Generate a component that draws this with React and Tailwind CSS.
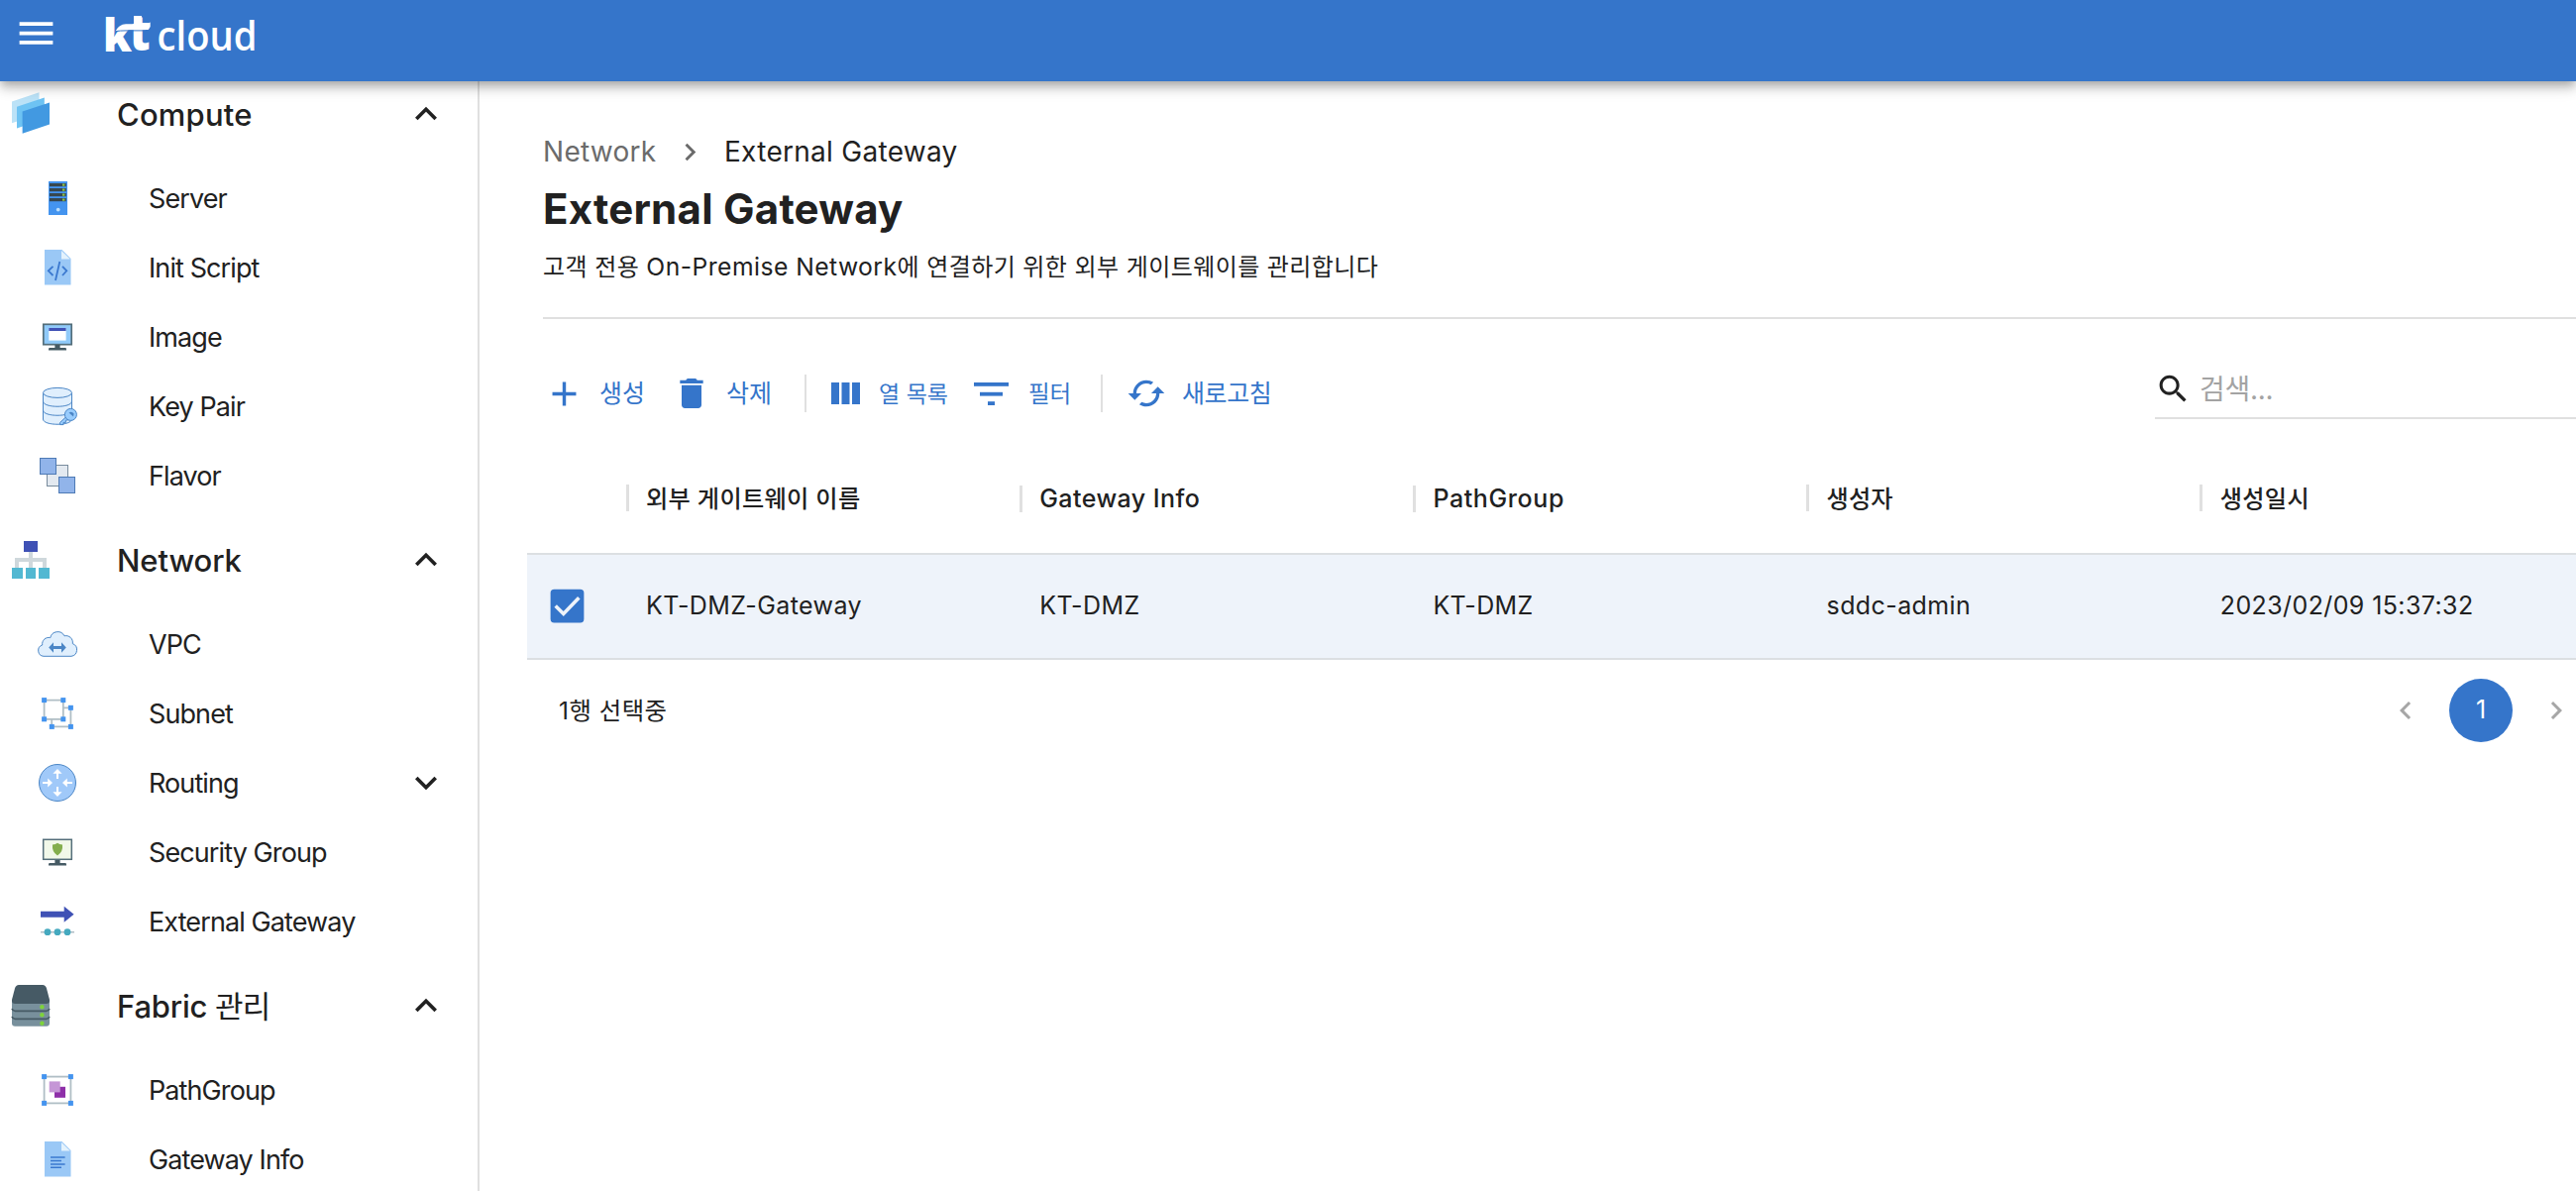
import React from "react";

/* ---------- shared icon helpers ---------- */
function Mui({ d, className }) {
  return (
    <svg viewBox="0 0 24 24" fill="currentColor" className={className}>
      <path d={d} />
    </svg>
  );
}

const PATHS = {
  menu: "M3 18h18v-2H3v2zm0-5h18v-2H3v2zm0-7v2h18V6H3z",
  less: "M12 8l-6 6 1.41 1.41L12 10.83l4.59 4.58L18 14z",
  more: "M16.59 8.59L12 13.17 7.41 8.59 6 10l6 6 6-6z",
  before: "M15.41 7.41L14 6l-6 6 6 6 1.41-1.41L10.83 12z",
  next: "M10 6L8.59 7.41 13.17 12l-4.58 4.59L10 18l6-6z",
  add: "M19 13h-6v6h-2v-6H5v-2h6V5h2v6h6v2z",
  trash: "M6 19c0 1.1.9 2 2 2h8c1.1 0 2-.9 2-2V7H6v12zM19 4h-3.5l-1-1h-5l-1 1H5v2h14V4z",
  cached:
    "M19 8l-4 4h3c0 3.31-2.69 6-6 6-1.01 0-1.97-.25-2.8-.7l-1.46 1.46C8.97 19.54 10.43 20 12 20c4.42 0 8-3.58 8-8h3l-4-4zM6 12c0-3.31 2.69-6 6-6 1.01 0 1.97.25 2.8.7l1.46-1.46C15.03 4.46 13.57 4 12 4c-4.42 0-8 3.58-8 8H1l4 4 4-4H6z",
  search:
    "M15.5 14h-.79l-.28-.27C15.41 12.59 16 11.11 16 9.5 16 5.91 13.09 3 9.5 3S3 5.91 3 9.5 5.91 16 9.5 16c1.61 0 3.09-.59 4.23-1.57l.27.28v.79l5 4.99L20.49 19l-4.99-5zm-6 0C7.01 14 5 11.99 5 9.5S7.01 5 9.5 5 14 7.01 14 9.5 11.99 14 9.5 14z",
};

/* Icons are drawn around a (0,0) centre in a 48px box. */
function Icon({ children }) {
  return (
    <svg viewBox="-24 -24 48 48" className="h-12 w-12 shrink-0">
      {children}
    </svg>
  );
}

const Stand = () => (
  <>
    <rect x="-2.6" y="8" width="5.2" height="4" fill="#455a64" />
    <path d="M-9 13.5v-1.2q0-1.3 1.3-1.3h15.4q1.3 0 1.3 1.3v1.2z" fill="#455a64" />
  </>
);

const Page = ({ children }) => (
  <>
    <path d="M-13 -18H4.5L13.5 -9V17.5H-13z" fill="#9ac8f6" />
    <path d="M4 -17V-8.5H12.8z" fill="#e3f2fd" />
    {children}
  </>
);

const Handle = ({ x, y }) => <rect x={x - 2.5} y={y - 2.5} width="5" height="5" fill="#4494ef" />;

const ICONS = {
  compute: (
    <Icon>
      <polygon points="-19,-12.5 8.5,-21.7 8.5,0 -19,9.2" fill="#bbe2f7" />
      <polygon points="-14,-7.2 13.8,-16.6 13.8,5 -14,14.6" fill="#6ec3f3" />
      <polygon points="-8.4,-2.5 19,-11.6 19,10.4 -8.4,19.8" fill="#4299e1" />
    </Icon>
  ),
  network: (
    <Icon>
      <path d="M0 -10V9M-14 9V0H14V9" fill="none" stroke="#cfd8dc" strokeWidth="4" />
      <rect x="-7" y="-19" width="14" height="11" fill="#3f51b5" />
      <rect x="-19" y="8" width="11" height="11" fill="#52b8d2" />
      <rect x="-5" y="8" width="10" height="11" fill="#52b8d2" />
      <rect x="8" y="8" width="11" height="11" fill="#52b8d2" />
    </Icon>
  ),
  fabric: (
    <Icon>
      <path d="M-19 -6H19V17.5Q19 20.7 15.8 20.7H-15.8Q-19 20.7 -19 17.5z" fill="#78909c" />
      <path d="M-12 -21H12Q15 -21 16 -17.5L19 -6V-5Q19 -2 15.8 -2H-15.8Q-19 -2 -19 -5V-6L-16 -17.5Q-15 -21 -12 -21z" fill="#465a65" />
      <path d="M-19 3Q-18 5.3 -15.8 5.3H15.8Q18 5.3 19 3M-19 11Q-18 13.3 -15.8 13.3H15.8Q18 13.3 19 11" fill="none" stroke="#465a65" strokeWidth="1.8" />
      <circle cx="11.4" cy="1.2" r="2.2" fill="#7ed33b" />
      <circle cx="11.4" cy="9.3" r="2.2" fill="#7ed33b" />
      <circle cx="11.4" cy="17.8" r="2.2" fill="#7ed33b" />
    </Icon>
  ),
  server: (
    <Icon>
      <rect x="-9" y="-17" width="19" height="34" fill="#4494ef" />
      {[-15, -10, -5, 0].map((y) => (
        <g key={y}>
          <rect x="-8" y={y} width="16.8" height="3.2" fill="#37474f" />
          <rect x="5" y={y + 0.5} width="2.4" height="2.2" fill="#8bc34a" />
        </g>
      ))}
      <circle cx=".7" cy="11.6" r="1.9" fill="#bbdefb" />
    </Icon>
  ),
  script: (
    <Icon>
      <Page>
        <path d="M-4.5 -1.2L-9.2 3.3L-4.5 8M5 -1.2L9.3 3.3L5 8M2.3 -6L-2 13" fill="none" stroke="#3a78cf" strokeWidth="1.8" />
      </Page>
    </Icon>
  ),
  image: (
    <Icon>
      <rect x="-14.2" y="-12.7" width="28.4" height="20.4" fill="#90caf9" stroke="#546e7a" strokeWidth="1.7" />
      <rect x="-8.7" y="-9" width="17.3" height="12.6" fill="#fff" />
      <rect x="-8.7" y="-9" width="17.3" height="3" fill="#3f51b5" />
      <Stand />
    </Icon>
  ),
  keypair: (
    <Icon>
      <g fill="#e0effd" stroke="#4b86c6" strokeWidth="1">
        <path d="M-14.5 -13.5V13C-14.5 20 14.5 20 14.5 13V-13.5" />
        <ellipse cx="0" cy="-13.6" rx="14.5" ry="5" />
        <path d="M-14.5 -5C-14.5 2 14.5 2 14.5 -5M-14.5 4C-14.5 11 14.5 11 14.5 4" fill="none" />
      </g>
      <path d="M9.5 10L2.6 16.4V18.6H6V16.4H8.4V14.2L12 13.6" fill="#98ccfd" stroke="#4b86c6" strokeWidth="1" />
      <circle cx="13.4" cy="8.4" r="6" fill="#98ccfd" stroke="#4b86c6" strokeWidth="1" />
      <path d="M11.5 6.4Q14.5 4.5 16.6 7.6L16 10.4z" fill="#4b86c6" />
    </Icon>
  ),
  flavor: (
    <Icon>
      <rect x="-10.5" y="-10.5" width="21" height="21" fill="#e3e9f0" stroke="#788b9c" />
      <rect x="-17.5" y="-17.5" width="16" height="16" fill="#91b4ea" stroke="#4e7ab5" />
      <rect x="1.5" y="1.5" width="16" height="16" fill="#91b4ea" stroke="#4e7ab5" />
    </Icon>
  ),
  vpc: (
    <Icon>
      <path d="M-14 12.3A5.8 5.8 0 0 1 -15.3 1A6.6 6.6 0 0 1 -7.2 -6.4A7.6 7.6 0 0 1 7 -8.2A6.8 6.8 0 0 1 15.3 -.4A6.6 6.6 0 0 1 14 12.3z" fill="#e0effd" stroke="#4b86c6" strokeWidth="1" />
      <path d="M-8.8 3.5L-4 -1.8V1.9H4V-1.8L8.8 3.5L4 8.8V5.1H-4V8.8z" fill="#4b86c6" />
    </Icon>
  ),
  subnet: (
    <Icon>
      <path d="M-13.4 -13.4H5.8V5.8H-13.4zM5.8 -5.6H13.4V13.4H-5.8V5.8" fill="none" stroke="#b0bec5" strokeWidth="1.8" />
      <Handle x={-13.4} y={-13.4} />
      <Handle x={5.8} y={-13.4} />
      <Handle x={-13.4} y={5.8} />
      <Handle x={5.8} y={5.8} />
      <Handle x={13.4} y={-5.7} />
      <Handle x={-5.7} y={13.4} />
      <Handle x={13.4} y={13.4} />
    </Icon>
  ),
  routing: (
    <Icon>
      <circle r="18.5" fill="#a0c9f9" stroke="#4b86c6" strokeWidth="1" />
      <g fill="#fff">
        <path d="M0 -14L4.6 -9.2H1V-4H-1V-9.2H-4.6z" />
        <path d="M0 14L4.6 9.2H1V4H-1V9.2H-4.6z" />
        <path d="M-5 0L-9.8 -4.6V-1H-15V1H-9.8V4.6z" />
        <path d="M5 0L9.8 -4.6V-1H15V1H9.8V4.6z" />
      </g>
    </Icon>
  ),
  security: (
    <Icon>
      <rect x="-14.3" y="-12.7" width="28.6" height="20" fill="#f1f8e9" stroke="#546e7a" strokeWidth="1.5" />
      <path d="M0 -9.2Q2 -7.6 5 -7.4Q5.8 0 0 3.4Q-5.8 0 -5 -7.4Q-2 -7.6 0 -9.2z" fill="#83ae4d" />
      <Stand />
    </Icon>
  ),
  external: (
    <Icon>
      <path d="M-17 -10.2H6.7V-15.2L16.6 -7.2L6.7 .8V-4.2H-17z" fill="#3f51b5" />
      <path d="M-17 10.7H17" stroke="#b0bec5" strokeWidth="1.6" />
      <circle cx="-10" cy="10.7" r="3.4" fill="#45a9bf" />
      <circle cx="0" cy="10.7" r="3.4" fill="#45a9bf" />
      <circle cx="10" cy="10.7" r="3.4" fill="#45a9bf" />
    </Icon>
  ),
  pathgroup: (
    <Icon>
      <rect x="-13.4" y="-13.4" width="26.8" height="26.8" fill="none" stroke="#b0bec5" strokeWidth="1.8" />
      <rect x="-3" y="-3.2" width="11" height="11" fill="#8e2fa8" />
      <rect x="-8.3" y="-8.6" width="11" height="11" fill="#c596d6" />
      <Handle x={-13.4} y={-13.4} />
      <Handle x={13.4} y={-13.4} />
      <Handle x={-13.4} y={13.4} />
      <Handle x={13.4} y={13.4} />
    </Icon>
  ),
  info: (
    <Icon>
      <Page>
        <path d="M-7 -2H7.6M-7 1.4H4M-7 4.9H7.6M-7 8.2H4" stroke="#3a78cf" strokeWidth="1.5" />
      </Page>
    </Icon>
  ),
};

/* ---------- header ---------- */
function Logo() {
  return (
    <svg viewBox="95 0 180 82" className="ml-9 h-[82px] w-[180px]" fill="#fff">
      <text x="103.9" y="51.5" fontSize="46.5" fontWeight="800" fontFamily="'Open Sans', sans-serif" textLength="29" lengthAdjust="spacingAndGlyphs">
        k
      </text>
      <text x="130.5" y="51.2" fontSize="50" fontWeight="800" fontFamily="'Open Sans', sans-serif" textLength="21" lengthAdjust="spacingAndGlyphs">
        t
      </text>
      <rect x="135" y="16" width="8" height="16" />
      <path d="M116.5 31.5Q120 24.5 127 24.3H144Q149 24.3 151.7 22.6V26.8Q151 29.8 146.5 30.3H127Q121 30.3 116.5 31.5z" />
      <path d="M116.5 31.6Q121 30.9 127 30.9H148" fill="none" stroke="#3575ca" strokeWidth="1" />
      <text x="158.6" y="51.3" fontSize="41" fontWeight="600" fontFamily="'Open Sans', sans-serif" textLength="101" lengthAdjust="spacingAndGlyphs">
        cloud
      </text>
    </svg>
  );
}

function Header() {
  return (
    <header className="relative z-10 flex h-[82px] shrink-0 bg-[#3575ca] pl-[14px] text-white shadow-[0_4px_8px_-2px_rgba(0,0,0,0.2),0_8px_10px_rgba(0,0,0,0.14),0_2px_20px_rgba(0,0,0,0.12)]">
      <Mui d={PATHS.menu} className="mt-[11px] h-[45px] w-[45px]" />
      <Logo />
    </header>
  );
}

/* ---------- sidebar ---------- */
const MENU = [
  {
    icon: "compute",
    label: "Compute",
    track: "tracking-[0.2px]",
    items: [
      { icon: "server", label: "Server" },
      { icon: "script", label: "Init Script" },
      { icon: "image", label: "Image" },
      { icon: "keypair", label: "Key Pair" },
      { icon: "flavor", label: "Flavor" },
    ],
  },
  {
    icon: "network",
    label: "Network",
    track: "tracking-[-0.1px]",
    items: [
      { icon: "vpc", label: "VPC" },
      { icon: "subnet", label: "Subnet" },
      { icon: "routing", label: "Routing", expandable: true },
      { icon: "security", label: "Security Group" },
      { icon: "external", label: "External Gateway" },
    ],
  },
  {
    icon: "fabric",
    label: "Fabric",
    labelKo: "관리",
    track: "tracking-[-0.2px]",
    items: [
      { icon: "pathgroup", label: "PathGroup" },
      { icon: "info", label: "Gateway Info" },
    ],
  },
];

function Sidebar() {
  return (
    <nav className="-mt-[17px] w-[484px] shrink-0 border-r-2 border-[#e0e0e0]">
      {MENU.map((group) => (
        <section key={group.label}>
          <div className="flex h-[100px] items-center pl-[7px] pr-[30px]">
            {ICONS[group.icon]}
            <span className={"ml-[63px] flex-1 pt-0.5 text-[31px] font-medium " + group.track}>
              {group.label}
              {group.labelKo && <span className="font-normal tracking-[-0.9px]"> {group.labelKo}</span>}
            </span>
            <Mui d={PATHS.less} className="h-11 w-11" />
          </div>
          {group.items.map((item) => (
            <div key={item.label} className="flex h-[70px] items-center pl-[34px] pr-[30px]">
              {ICONS[item.icon]}
              <span className="ml-[68px] flex-1 pt-0.5 text-[27px] tracking-[-0.9px]">{item.label}</span>
              {item.expandable && <Mui d={PATHS.more} className="h-11 w-11" />}
            </div>
          ))}
        </section>
      ))}
    </nav>
  );
}

/* ---------- main ---------- */
function PageTitle() {
  return (
    <div className="border-b-2 border-[#e0e0e0] pb-[33px] pt-[53px]">
      <div className="flex h-9 items-center text-[28px] tracking-[0.28px]">
        <span className="w-[131px] text-[#6b6b6b]">Network</span>
        <Mui d={PATHS.next} className="h-[35px] w-[35px] text-[#6b6b6b]" />
        <span className="ml-[17px]">External Gateway</span>
      </div>
      <h1 className="mt-[10px] text-[42px] font-bold leading-[60px] tracking-[0.25px]">External Gateway</h1>
      <p className="mt-[10px] h-9 text-[24px] leading-9 tracking-[0.42px]">
        고객 전용 <span className="text-[24.7px] tracking-[0.45px]">On-Premise Network</span>에 연결하기 위한 외부 게이트웨이를 관리합니다
      </p>
    </div>
  );
}

function Toolbar() {
  return (
    <div className="mt-[37px] flex h-[76px] items-center text-[25px] text-[#3575ca]">
      <div className="flex w-[129px] items-center">
        <Mui d={PATHS.add} className="ml-[1px] h-[41px] w-[41px]" />
        <span className="ml-[15px] pt-0.5">생성</span>
      </div>
      <div className="flex w-[135px] items-center">
        <Mui d={PATHS.trash} className="ml-[1px] h-10 w-10" />
        <span className="ml-[15px] pt-0.5">삭제</span>
      </div>
      <div className="h-[38px] w-0.5 bg-[#e0e0e0]" />
      <div className="flex w-[169px] items-center pl-[25px]">
        <svg viewBox="0 0 29 22" className="h-[22px] w-[29px]" fill="currentColor">
          <rect x="0" width="8" height="22" />
          <rect x="10.5" width="8" height="22" />
          <rect x="21" width="8" height="22" />
        </svg>
        <span className="ml-[19px] pt-0.5 text-[23px]">열 목록</span>
      </div>
      <div className="flex w-[128px] items-center">
        <svg viewBox="0 0 35 23" className="h-[23px] w-[35px]" fill="currentColor">
          <rect x="0" width="35" height="3.8" />
          <rect x="6" y="9.8" width="23" height="3.8" />
          <rect x="14" y="19.2" width="7" height="3.8" />
        </svg>
        <span className="ml-[20px] pt-0.5 text-[23.5px]">필터</span>
      </div>
      <div className="h-[38px] w-0.5 bg-[#e0e0e0]" />
      <div className="flex items-center pl-[24px]">
        <Mui d={PATHS.cached} className="h-[40px] w-[40px]" />
        <span className="ml-[16px] pt-0.5 tracking-[-0.4px]">새로고침</span>
      </div>
      <div className="mb-3 ml-auto flex h-[60px] w-[425px] items-center self-end border-b-2 border-[#e0e0e0] text-[28px] tracking-[-0.3px] text-[#a3a3a3]">
        <Mui d={PATHS.search} className="h-[37px] w-[37px] text-[#212121]" />
        <span className="ml-2 pt-px">검색...</span>
      </div>
    </div>
  );
}

const COLUMNS = [
  { head: "외부 게이트웨이 이름", headStyle: "text-[24.2px] tracking-[0.3px]", value: "KT-DMZ-Gateway" },
  { head: "Gateway Info", headStyle: "text-[25px] tracking-[0.45px]", value: "KT-DMZ" },
  { head: "PathGroup", headStyle: "text-[25px] tracking-[0.6px]", value: "KT-DMZ" },
  { head: "생성자", headStyle: "text-[24.2px] tracking-[0.1px]", value: "sddc-admin" },
  { head: "생성일시", headStyle: "text-[24.2px] tracking-[0.3px]", value: "2023/02/09 15:37:32" },
];

function Table() {
  return (
    <div className="-ml-4 text-[25px]">
      <div className="flex h-[123px] items-center pt-[13px] font-medium">
        <div className="w-[99.5px] shrink-0" />
        {COLUMNS.map((c) => (
          <div key={c.head} className="flex w-[397.2px] shrink-0 items-center">
            <div className="h-[27px] w-[3px] bg-[#e0e0e0]" />
            <span className={"ml-[17.5px] pt-0.5 " + c.headStyle}>{c.head}</span>
          </div>
        ))}
      </div>
      <div className="flex h-[108px] items-center border-y-2 border-[#dcdfe2] bg-[#eef3fa] pb-0.5">
        <div className="w-[99.5px] shrink-0 pl-[18px]">
          <svg viewBox="0 0 24 24" className="h-[45px] w-[45px]">
            <rect x="3" y="3" width="18" height="18" rx="2" fill="#3575ca" />
            <path d="M5.7 12L10 16.3L18.3 7.6" fill="none" stroke="#eef3fa" strokeWidth="1.9" />
          </svg>
        </div>
        {COLUMNS.map((c) => (
          <div key={c.head} className="w-[397.2px] shrink-0 pl-[20.5px] pt-px tracking-[0.4px]">
            {c.value}
          </div>
        ))}
      </div>
      <div className="flex h-[102px] items-center justify-between">
        <span className="ml-8 text-[24.4px] tracking-[0.5px]">1행 선택중</span>
        <div className="-mr-3 flex items-center gap-3">
          <div className="grid h-16 w-16 place-items-center text-[#a6a6a6]">
            <Mui d={PATHS.before} className="h-9 w-9" />
          </div>
          <div className="grid h-16 w-16 place-items-center rounded-full bg-[#3575ca] text-white">1</div>
          <div className="grid h-16 w-16 place-items-center text-[#a6a6a6]">
            <Mui d={PATHS.next} className="h-9 w-9" />
          </div>
        </div>
      </div>
    </div>
  );
}

export default function App() {
  return (
    <div className="flex h-[1202px] w-full flex-col overflow-hidden whitespace-nowrap bg-white font-[Inter,'Noto_Sans_CJK_KR',sans-serif] text-[#212121]">
      <Header />
      <div className="flex min-h-0 flex-1">
        <Sidebar />
        <main className="min-w-0 flex-1 overflow-hidden pl-16">
          <PageTitle />
          <Toolbar />
          <Table />
        </main>
      </div>
    </div>
  );
}
